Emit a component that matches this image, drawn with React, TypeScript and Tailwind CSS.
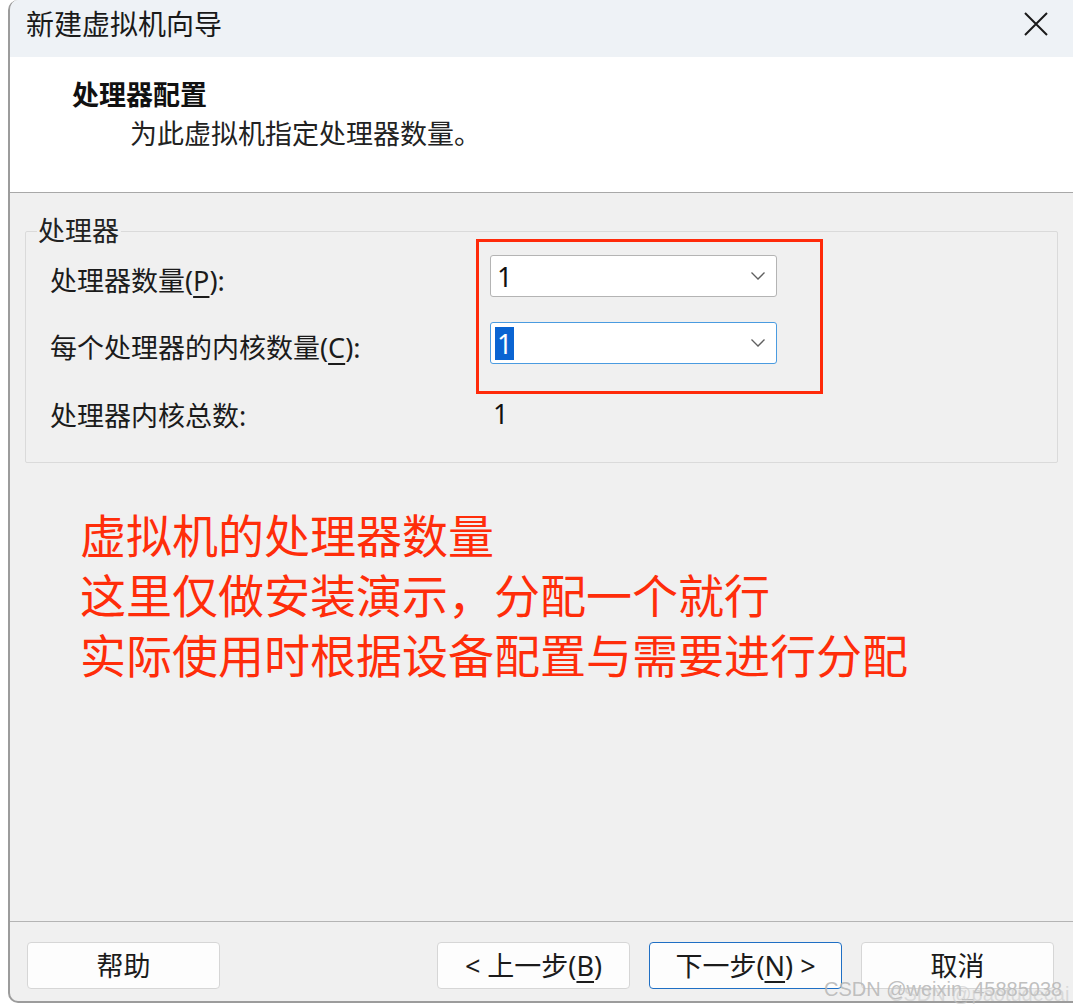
import React from 'react';

const ui = "font-['Noto_Sans','Noto_Sans_CJK_SC',sans-serif]";

const Chevron = () => (
    <svg width="16" height="10" viewBox="0 0 16 10" className="shrink-0">
        <path d="M1.5 1.5 L8 8 L14.5 1.5" fill="none" stroke="#5f5f5f" strokeWidth="1.3" />
    </svg>
);

interface ComboProps {
    value: string;
    focused?: boolean;
}

const Combo = ({ value, focused = false }: ComboProps) => (
    <div
        className={`flex h-[42px] w-[287px] items-center justify-between rounded-[3px] bg-white pl-[4px] pr-[10px] ${
            focused ? 'border border-[#4a9be0]' : 'border border-[#b4b4b4]'
        }`}
    >
        {focused ? (
            <span className="bg-[#0a64d2] px-[2px] text-[27px] leading-[33px] text-white">{value}</span>
        ) : (
            <span className="px-[2px] text-[27px] leading-[33px] text-[#111]">{value}</span>
        )}
        <Chevron />
    </div>
);

interface ButtonProps {
    children: React.ReactNode;
    primary?: boolean;
}

const DlgButton = ({ children, primary = false }: ButtonProps) => (
    <button
        className={`flex h-[47px] w-[193px] items-center justify-center rounded-[4px] bg-[#fdfdfd] text-[27px] leading-[34px] text-[#1b1b1b] ${
            primary ? 'border border-[#1f6fc4]' : 'border border-[#d6d6d6]'
        }`}
    >
        {children}
    </button>
);

export default function App() {
    return (
        <div className={`relative h-[1004px] w-[1073px] overflow-hidden bg-white pl-[8px] ${ui}`}>
            <div className="flex h-[1003px] flex-col overflow-hidden rounded-tl-[10px] rounded-bl-[10px] border-b-2 border-l-2 border-[#9c9c9c] bg-[#f0f0f0]">
                {/* title bar */}
                <div className="flex h-[57px] shrink-0 items-start justify-between bg-[#eef2f6] pl-[16px] pr-[24px] pt-[6px]">
                    <span className="text-[28px] leading-[36px] text-[#1a1a1a]">新建虚拟机向导</span>
                    <svg width="26" height="26" viewBox="0 0 26 26" className="mt-[5px]">
                        <path d="M2 2 L24 24 M24 2 L2 24" stroke="#1a1a1a" strokeWidth="2" />
                    </svg>
                </div>

                {/* header */}
                <div className="h-[136px] shrink-0 border-b border-[#a8a8a8] bg-white pl-[62px] pt-[22px]">
                    <div className="text-[27px] font-bold leading-[32px] text-[#111]">处理器配置</div>
                    <div className="ml-[58px] mt-[7px] text-[27px] leading-[32px] text-[#222]">为此虚拟机指定处理器数量。</div>
                </div>

                {/* body */}
                <div className="relative flex-1 px-[15px] pt-[21px]">
                    <fieldset className="rounded-[2px] border border-[#dadada] pb-[27px] pl-[24px]">
                        <legend className="ml-[-13px] pl-[1px] pr-[2px] text-[27px] leading-[34px] text-[#222]">处理器</legend>
                        <div className="mt-[6px] grid h-[42px] grid-cols-[440px_288px] items-center">
                            <span className="pt-[10px] text-[27px] leading-[34px] text-[#1b1b1b]">
                                处理器数量(<span className="underline underline-offset-[5px]">P</span>):
                            </span>
                            <Combo value="1" />
                        </div>
                        <div className="mt-[25px] grid h-[42px] grid-cols-[440px_288px] items-center">
                            <span className="pt-[10px] text-[27px] leading-[34px] text-[#1b1b1b]">
                                每个处理器的内核数量(<span className="underline underline-offset-[5px]">C</span>):
                            </span>
                            <Combo value="1" focused />
                        </div>
                        <div className="mt-[30px] grid h-[42px] grid-cols-[440px_288px] items-center">
                            <span className="pt-[4px] text-[27px] leading-[34px] text-[#1b1b1b]">处理器内核总数:</span>
                            <span className="pl-[3px] text-[27px] leading-[34px] text-[#111]">1</span>
                        </div>
                    </fieldset>

                    {/* annotation */}
                    <div className="absolute left-[466px] top-[46px] h-[155px] w-[347px] border-[3px] border-[#ff2a0a]" />

                    <div className="ml-[55px] mt-[42px] text-[46px] leading-[60px] text-[#ff2d0a]">
                        <div>虚拟机的处理器数量</div>
                        <div>这里仅做安装演示，分配一个就行</div>
                        <div>实际使用时根据设备配置与需要进行分配</div>
                    </div>
                </div>

                {/* footer */}
                <div className="flex h-[80px] shrink-0 items-start border-t border-[#b4b4b4] pl-[17px] pt-[20px]">
                    <DlgButton>帮助</DlgButton>
                    <div className="ml-[217px] flex gap-[19px]">
                        <DlgButton>
                            &lt; 上一步(<span className="underline underline-offset-[5px]">B</span>)
                        </DlgButton>
                        <DlgButton primary>
                            下一步(<span className="underline underline-offset-[5px]">N</span>) &gt;
                        </DlgButton>
                        <DlgButton>取消</DlgButton>
                    </div>
                </div>
            </div>

            {/* watermark */}
            <div className="pointer-events-none absolute left-[824px] top-[977px] whitespace-nowrap font-['Liberation_Sans',sans-serif] text-[20px] leading-[24px] text-[#b8b8b8]/90">
                CSDN @weixin_45885038
            </div>
            <div className="pointer-events-none absolute left-[889px] top-[984px] whitespace-nowrap font-['Liberation_Sans',sans-serif] text-[20px] leading-[20px] text-[#c8c8c8]/60">
                CSDN @paotudecai
            </div>
        </div>
    );
}
